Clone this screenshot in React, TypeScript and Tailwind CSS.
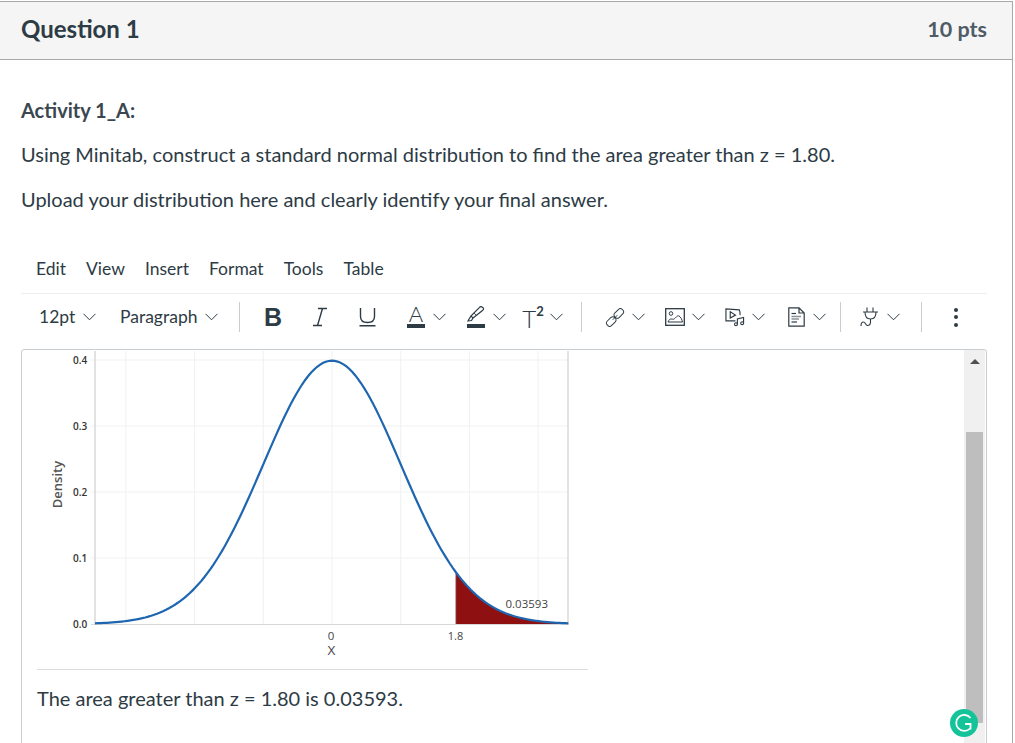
import type { ReactNode } from 'react';

const INK = '#2d3b45';

// standard normal curve, in page coordinates so it can be read against the screenshot
function curveX(z: number) { return 332 + z * 68.7; }
function curveY(z: number) {
  const pdf = Math.exp(-(z * z) / 2) / Math.sqrt(2 * Math.PI);
  return 624 - (pdf / 0.4) * 264;
}
function curvePoints(from: number, to: number) {
  const pts: string[] = [];
  const steps = 160;
  for (let i = 0; i <= steps; i++) {
    const z = from + ((to - from) * i) / steps;
    pts.push(`${curveX(z).toFixed(2)} ${curveY(z).toFixed(2)}`);
  }
  return pts;
}

function Chevron() {
  return (
    <svg width="13" height="8" viewBox="0 0 13 8" fill="none" stroke={INK} strokeWidth="1" className="shrink-0">
      <path d="M0.5 0.8 L6.5 6.8 L12.5 0.8" />
    </svg>
  );
}

function Divider() {
  return <div className="w-px h-[30px] bg-[#c7cdd1] shrink-0" />;
}

function SplitButton({ children }: { children: ReactNode }) {
  return (
    <div className="w-[60px] shrink-0 flex items-center gap-[7px]">
      <div className="w-5 h-6 flex items-center justify-center shrink-0">{children}</div>
      <Chevron />
    </div>
  );
}

function ChartPanel() {
  const top = curvePoints(-3.45, 3.44);
  const tail = curvePoints(1.8, 3.44);
  const labelFont = '"Open Sans", "Noto Sans", sans-serif';
  return (
    <svg width="551" height="318" viewBox="37 351 551 318" className="block">
      {[125.9, 194.6, 263.3, 332, 400.7, 469.4, 538.1].map((x) => (
        <line key={x} x1={x} y1="351" x2={x} y2="624" stroke="#f1f1f1" strokeWidth="1" />
      ))}
      {[360, 426, 492, 558].map((y) => (
        <line key={y} x1="91" y1={y} x2="568" y2={y} stroke="#f1f1f1" strokeWidth="1" />
      ))}
      <path d={`M${tail.join(' L')} L568 624 L455.7 624 Z`} fill="#8f1010" />
      <line x1="455.7" y1={curveY(1.8)} x2="455.7" y2="624" stroke="#b0a0a0" strokeWidth="0.7" />
      <line x1="95" y1="351" x2="95" y2="625" stroke="#d8d8d8" strokeWidth="1.5" />
      <line x1="568" y1="351" x2="568" y2="625" stroke="#d0d0d0" strokeWidth="1.2" />
      <line x1="91" y1="624.5" x2="568" y2="624.5" stroke="#d8d8d8" strokeWidth="1.2" />
      <path d={`M${top.join(' L')}`} fill="none" stroke="#1f66b0" strokeWidth="2.2" />
      {[['0.4', 363.5], ['0.3', 429.5], ['0.2', 495.5], ['0.1', 561.5], ['0.0', 627.5]].map(([t, y]) => (
        <text key={t} x="73" y={y} fontFamily={labelFont} fontSize="10" fontWeight="600" fill="#333">{t}</text>
      ))}
      <text transform="translate(62 484.5) rotate(-90)" textAnchor="middle" fontFamily={labelFont} fontSize="13" fontWeight="600" fill="#555">Density</text>
      <text x="331" y="640" textAnchor="middle" fontFamily={labelFont} fontSize="11.5" fill="#444">0</text>
      <text x="331.5" y="655" textAnchor="middle" fontFamily={labelFont} fontSize="13.5" fill="#444">X</text>
      <text x="455.5" y="640" textAnchor="middle" fontFamily={labelFont} fontSize="11" fill="#444">1.8</text>
      <text x="505.5" y="607.5" fontFamily={labelFont} fontSize="11.5" fill="#444">0.03593</text>
    </svg>
  );
}

export default function App() {
  return (
    <div className={'h-[743px] overflow-hidden bg-white pt-px font-["Lato",sans-serif] text-[#2d3b45]'}>
      <div className="w-[1013px] h-[760px] border-t border-r border-[#a8a8a8]">

        {/* Question header */}
        <div className="h-[58px] bg-[#f5f5f5] border-b border-[#a8a8a8] pl-[21px] pr-[25px] pb-[3px] flex items-center justify-between">
          <h2 className="text-[24px] font-bold leading-none">Question 1</h2>
          <span className="mt-px text-[21.5px] font-bold text-[#4f5b65] leading-none">10 pts</span>
        </div>

        {/* Question text */}
        <div className="pt-[35px] pl-[21px] text-[20px] leading-[30px]">
          <p className="font-bold text-[#3a4750]">Activity 1_A:</p>
          <p className="mt-[14px]">Using Minitab, construct a standard normal distribution to find the area greater than z = 1.80.</p>
          <p className="mt-[15px]">Upload your distribution here and clearly identify your final answer.</p>
        </div>

        <div className="ml-[21px] w-[966px] mt-[40px]">
          {/* Menu bar */}
          <div className="h-[30px] pl-[15px] flex items-center gap-5 text-[17.5px]">
            {['Edit', 'View', 'Insert', 'Format', 'Tools', 'Table'].map((m) => (
              <span key={m}>{m}</span>
            ))}
          </div>

          {/* Toolbar */}
          <div className="mt-[9px] h-[47px] border-t border-[#eeeeee] pl-[18px] flex items-center text-[17.5px]">
            <span className="w-[44px] shrink-0">12pt</span>
            <div className="w-[37px] shrink-0"><Chevron /></div>
            <span className="w-[85px] shrink-0">Paragraph</span>
            <Chevron />
            <div className="w-[21px] shrink-0" />
            <Divider />
            <div className="w-[24px] shrink-0" />

            <span className={'w-[48px] shrink-0 font-["Liberation_Sans",sans-serif] font-bold text-[25px] leading-none'}>B</span>
            <div className="w-[47px] shrink-0">
              <svg width="16" height="20" viewBox="0 0 16 20" fill="none" stroke={INK} strokeWidth="1.4">
                <path d="M6 1.5 H15 M1 18.5 H10 M10.5 1.5 L5.5 18.5" />
              </svg>
            </div>
            <div className="w-[47px] shrink-0">
              <svg width="17" height="20" viewBox="0 0 17 20" fill="none" stroke={INK} strokeWidth="1.4">
                <path d="M1.5 1 V9.5 C1.5 13 4 15.5 8.5 15.5 C13 15.5 15.5 13 15.5 9.5 V1 M0.5 18.8 H16.5" />
              </svg>
            </div>

            <SplitButton>
              <div className="flex flex-col items-center w-[18px]">
                <span className="text-[22px] leading-[16px] font-light">A</span>
                <div className="w-[18px] h-[4px] bg-[#2d3b45] mt-[2px]" />
              </div>
            </SplitButton>
            <SplitButton>
              <div className="flex flex-col items-center w-[18px]">
                <svg width="18" height="16" viewBox="0 0 18 16" fill="none" stroke={INK} strokeWidth="1.2">
                  <path d="M1 15 L4.5 14.5 L6 12 L4 10 L1.5 14 Z M6 12 L15.5 4.5 C16.8 3.5 16.8 2.5 16 1.8 L15 1 C14.2 0.4 13.2 0.6 12.5 1.4 L4 10" />
                  <path d="M7 7 L10 10" strokeWidth="0.9" />
                </svg>
                <div className="w-[18px] h-[4px] bg-[#2d3b45] mt-[2px]" />
              </div>
            </SplitButton>
            <div className="-ml-[3px] shrink-0" />
            <SplitButton>
              <span className="text-[24px] leading-none whitespace-nowrap font-light pt-[3px]">
                T<sup className="text-[13px] font-bold align-[5px] leading-none">2</sup>
              </span>
            </SplitButton>

            <div className="-ml-[2px] mr-[23px] flex"><Divider /></div>

            <SplitButton>
              <svg width="21" height="21" viewBox="0 0 21 21" fill="none" stroke={INK} strokeWidth="1">
                <rect x="9" y="3" width="11" height="6.5" rx="3" transform="rotate(-45 14.5 6.2)" />
                <rect x="1" y="11.5" width="11" height="6.5" rx="3" transform="rotate(-45 6.5 14.7)" />
                <path d="M8 13 L13 8" />
              </svg>
            </SplitButton>
            <SplitButton>
              <svg width="20" height="18" viewBox="0 0 20 18" fill="none" stroke={INK} strokeWidth="1.3">
                <rect x="0.7" y="0.7" width="18.6" height="16.6" />
                <circle cx="6" cy="5.5" r="1.8" strokeWidth="1" />
                <path d="M3 14 C5 9 7 12 9 11 C11 10 12 7 14 8 C16 9 17 12 17.5 14 Z" strokeWidth="1" />
              </svg>
            </SplitButton>
            <SplitButton>
              <svg width="21" height="20" viewBox="0 0 21 20" fill="none" stroke={INK} strokeWidth="1.2">
                <path d="M11 14 H1 V1.5 L15 2.5 C16 4.5 16 6 15.8 8" />
                <path d="M5.5 4.5 L11 8 L5.5 11 Z" />
                <path d="M13 17.5 V12 L19.5 10.5 V16.5" />
                <circle cx="11.5" cy="17.5" r="1.5" />
                <circle cx="18" cy="16.5" r="1.5" />
              </svg>
            </SplitButton>
            <div className="w-px shrink-0" />
            <SplitButton>
              <svg width="17" height="20" viewBox="0 0 17 20" fill="none" stroke={INK} strokeWidth="1.2">
                <path d="M0.8 0.8 H11 L16.2 6 V19.2 H0.8 Z M11 0.8 V6 H16.2" />
                <path d="M3.5 6.5 H8" />
                <path d="M3.5 9.5 H13 M3.5 12 H11" stroke="#8a9298" strokeWidth="1.6" />
                <path d="M3.5 15 H9" />
              </svg>
            </SplitButton>

            <div className="-ml-[6px] mr-[19px] flex"><Divider /></div>

            <SplitButton>
              <svg width="20" height="20" viewBox="0 0 20 20" fill="none" stroke={INK} strokeWidth="1.1">
                <path d="M7 0.5 V5 M13 0.5 V5 M3 5 H18 M5 5 C5 10 7 12 10.5 12 C14 12 16 10 16 5 M10.5 12 V15 C10.5 17.5 9 18.5 7.5 18.5 C5.5 18.5 5.5 15 3.5 15 C2 15 1 16.5 1 19" />
              </svg>
            </SplitButton>
            <div className="ml-px flex"><Divider /></div>
            <div className="ml-[32px] flex flex-col gap-[3.5px] w-[4px] shrink-0">
              <div className="w-[4px] h-[4px] rounded-full bg-[#2d3b45]" />
              <div className="w-[4px] h-[4px] rounded-full bg-[#2d3b45]" />
              <div className="w-[4px] h-[4px] rounded-full bg-[#2d3b45]" />
            </div>
          </div>

          {/* Editor frame */}
          <div className="mt-[9px] h-[400px] border border-[#c7cdd1] rounded-[3px] flex">
            <div className="flex-1 pt-px pl-[15px]">
              <ChartPanel />
              <div className="w-[551px] border-t border-[#dddddd]" />
              <p className="mt-[13px] text-[20px] leading-[30px]">The area greater than z = 1.80 is 0.03593.</p>
            </div>
            <div className="w-[21px] bg-[#f0f0f0] mr-px flex flex-col items-center">
              <div className="mt-[9px] w-0 h-0 border-x-[5px] border-x-transparent border-b-[5px] border-b-[#505050]" />
              <div className="mt-[68px] w-[17px] h-[291px] bg-[#bebebe]" />
            </div>
          </div>
        </div>
      </div>

      {/* Grammarly badge */}
      <div className="fixed left-[950px] top-[709px] w-7 h-7 rounded-full bg-[#15c39a] flex items-center justify-center">
        <svg width="20" height="20" viewBox="0 0 20 20" fill="none" stroke="#ffffff" strokeWidth="1.8">
          <path d="M16.5 5 A8 8 0 1 0 16 15.5" />
          <path d="M11 11 H16.5 V16.5" />
        </svg>
      </div>
    </div>
  );
}
